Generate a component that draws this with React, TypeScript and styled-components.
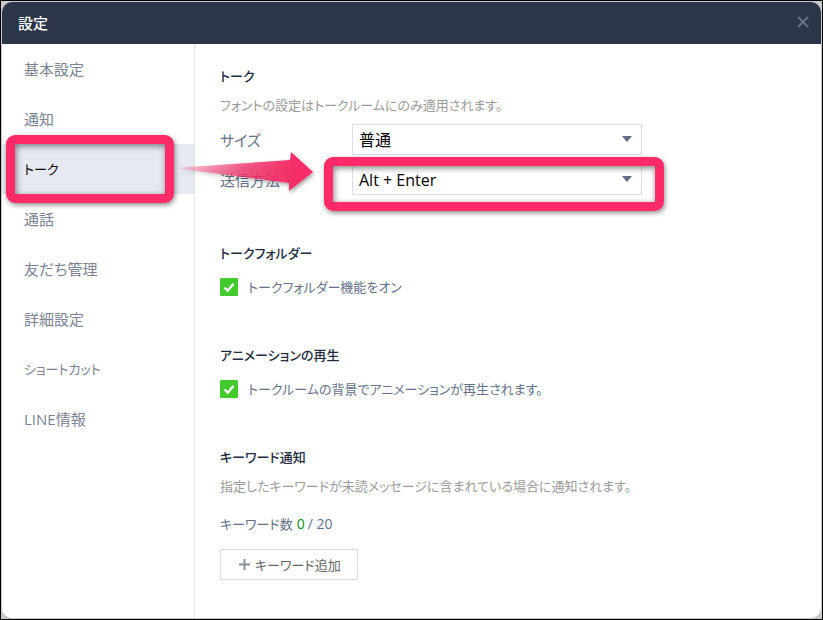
import React, { useState } from "react";
import styled, { createGlobalStyle, css } from "styled-components";

const GlobalStyle = createGlobalStyle`
  *, *::before, *::after { box-sizing: border-box; }
  body {
    margin: 0;
    font-family: "Open Sans", "Noto Sans CJK JP", sans-serif;
    font-size: 13px;
    line-height: 20px;
    font-feature-settings: "palt";
    color: #6b7487;
  }
  button, select, input { font: inherit; font-feature-settings: inherit; }
`;

const Desktop = styled.div`
  display: flex;
  min-height: 100vh;
  border: 1px solid #000;
  background: #c9c9cb;
  padding: 1px;
`;

const Window = styled.div`
  display: flex;
  flex: 1;
  flex-direction: column;
  overflow: hidden;
  border-radius: 10px;
  background: #fff;
`;

const TitleBar = styled.header`
  display: flex;
  align-items: center;
  justify-content: space-between;
  height: 42px;
  padding: 0 12px 0 16px;
  background: #2c3549;
`;

const WindowTitle = styled.h1`
  margin: 0;
  font-size: 15px;
  font-weight: 500;
  color: #fff;
`;

const CloseButton = styled.button`
  display: flex;
  padding: 0 0 2px;
  border: 0;
  background: none;
  color: #65718a;
`;

const Body = styled.div`
  display: flex;
  flex: 1;
`;

const Nav = styled.nav`
  flex: 0 0 193px;
  border-right: 1px solid #e5e6ea;
  font-size: 15px;
`;

const NavItem = styled.a<{ $active: boolean; $compact: boolean }>`
  position: relative;
  display: flex;
  align-items: center;
  height: 50px;
  padding-left: 22px;
  background: ${(p) => (p.$active ? "#e6e9f1" : "transparent")};
  color: ${(p) => (p.$active ? "#000" : "#7b8394")};
  font-size: ${(p) => (p.$compact ? "13px" : "15px")};
  text-decoration: none;
`;

const Content = styled.main`
  display: flex;
  flex: 1;
  flex-direction: column;
  gap: 48px;
  padding: 22px 25px;
`;

const Section = styled.section`
  display: flex;
  flex-direction: column;
  align-items: flex-start;
`;

const SectionTitle = styled.h2`
  margin: 0 0 9px;
  font-size: 13px;
  font-weight: 500;
  color: #232c3e;
`;

const Note = styled.p`
  margin: 0;
  color: #9b9b9b;
`;

const Fields = styled.div`
  display: grid;
  grid-template-columns: 132px minmax(0, 290px);
  row-gap: 9px;
  align-self: stretch;
  align-items: center;
  padding-top: 9px;
`;

const FieldLabel = styled.label`
  color: #66728a;
  font-size: 15px;
`;

const SelectBox = styled.div`
  position: relative;
  display: flex;
`;

const Select = styled.select`
  flex: 1;
  height: 31px;
  padding: 0 6px;
  border: 1px solid #dcdfe5;
  border-radius: 0;
  background: #fff;
  color: #000;
  font-size: 16px;
  appearance: none;
`;

const SelectArrow = styled.svg`
  position: absolute;
  top: 12px;
  right: 10px;
  pointer-events: none;
`;

const CheckLabel = styled.label`
  display: flex;
  align-items: center;
  gap: 10px;
  padding-top: 5px;
  color: #66728a;
`;

const CheckBox = styled.span`
  display: grid;
  width: 18px;
  height: 18px;

  > * { grid-area: 1 / 1; }
`;

const CheckInput = styled.input`
  width: 18px;
  height: 18px;
  margin: 0;
  border: 1px solid #43cb2e;
  border-radius: 1px;
  appearance: none;

  &:checked { background: #43cb2e; }
`;

const CheckMark = styled.svg`
  pointer-events: none;
`;

const Count = styled.p`
  display: flex;
  gap: 4px;
  margin: 18px 0 15px;
  color: #66728a;
`;

const CountValue = styled.span`
  display: flex;
  gap: 3px;
  font-size: 14px;
`;

const CountNow = styled.b`
  font-weight: 400;
  color: #0b8a1c;
`;

const AddButton = styled.button`
  display: flex;
  align-items: center;
  gap: 5px;
  height: 31px;
  padding: 0 16px 0 18px;
  border: 1px solid #d9dce3;
  background: #fff;
  color: #666;
`;

const highlight = css`
  position: absolute;
  z-index: 2;
  border: 9px solid #ff2b68;
  border-radius: 9px;
  box-shadow: 1px 2px 5px rgba(0, 0, 0, 0.45), inset 1px 2px 6px rgba(0, 0, 0, 0.5);
  pointer-events: none;
`;

const NavHighlight = styled.span`
  ${highlight}
  inset: -9px 20px -9px 4px;
`;

const SelectHighlight = styled.span`
  ${highlight}
  inset: -7px -22px -16px -28px;
`;

const Pointer = styled.svg`
  position: absolute;
  z-index: 3;
  top: 3px;
  left: 170px;
  overflow: visible;
  pointer-events: none;
`;

const navItems = [
  { name: "基本設定" },
  { name: "通知" },
  { name: "トーク", compact: true, active: true },
  { name: "通話" },
  { name: "友だち管理" },
  { name: "詳細設定" },
  { name: "ショートカット", compact: true },
  { name: "LINE情報" },
];

function DownArrow() {
  return (
    <SelectArrow width="10" height="6" viewBox="0 0 10 6" aria-hidden="true">
      <path d="M0 0H10L5.8 5.2Q5 6 4.2 5.2Z" fill="#657087" />
    </SelectArrow>
  );
}

function PointerArrow() {
  return (
    <Pointer width="144" height="46" viewBox="0 0 144 46" aria-hidden="true">
      <defs>
        <linearGradient id="pointer-fill" x1="0" x2="1" y1="0" y2="0">
          <stop offset="0" stopColor="#f42c66" stopOpacity="0" />
          <stop offset="0.15" stopColor="#f42c66" stopOpacity="0.35" />
          <stop offset="0.5" stopColor="#f42c66" stopOpacity="0.72" />
          <stop offset="0.85" stopColor="#f42c66" stopOpacity="0.97" />
          <stop offset="1" stopColor="#ff2b68" />
        </linearGradient>
        <filter id="pointer-shadow" x="-5%" y="-20%" width="115%" height="150%">
          <feDropShadow dx="1" dy="2" stdDeviation="2" floodOpacity="0.4" />
        </filter>
      </defs>
      <path
        d="M2 21L118 13L119 5L141 25L117 44L117 36Z"
        fill="url(#pointer-fill)"
        filter="url(#pointer-shadow)"
      />
    </Pointer>
  );
}

function Check({ label }: { label: string }) {
  const [on, setOn] = useState(true);
  return (
    <CheckLabel>
      <CheckBox>
        <CheckInput type="checkbox" checked={on} onChange={() => setOn(!on)} />
        <CheckMark width="18" height="18" viewBox="0 0 18 18" aria-hidden="true">
          <path d="M4.5 9.5L7.7 12.7L13.5 5.8" fill="none" stroke="#fff" strokeWidth="2.4" />
        </CheckMark>
      </CheckBox>
      {label}
    </CheckLabel>
  );
}

export default function App() {
  return (
    <>
      <GlobalStyle />
      <Desktop>
        <Window>
          <TitleBar>
            <WindowTitle>設定</WindowTitle>
            <CloseButton type="button" aria-label="閉じる">
              <svg width="12" height="12" viewBox="0 0 12 12">
                <path d="M1.5 1.5L10.5 10.5M10.5 1.5L1.5 10.5" stroke="currentColor" strokeWidth="2" strokeLinecap="round" />
              </svg>
            </CloseButton>
          </TitleBar>
          <Body>
            <Nav>
              {navItems.map(({ name, active = false, compact = false }) => (
                <NavItem
                  key={name}
                  href="#"
                  $active={active}
                  $compact={compact}
                  aria-current={active ? "page" : undefined}
                >
                  {name}
                  {active && <NavHighlight />}
                  {active && <PointerArrow />}
                </NavItem>
              ))}
            </Nav>
            <Content>
              <Section>
                <SectionTitle>トーク</SectionTitle>
                <Note>フォントの設定はトークルームにのみ適用されます。</Note>
                <Fields>
                  <FieldLabel htmlFor="size">サイズ</FieldLabel>
                  <SelectBox>
                    <Select id="size">
                      <option>普通</option>
                    </Select>
                    <DownArrow />
                  </SelectBox>
                  <FieldLabel htmlFor="send">送信方法</FieldLabel>
                  <SelectBox>
                    <Select id="send">
                      <option>Alt + Enter</option>
                    </Select>
                    <DownArrow />
                    <SelectHighlight />
                  </SelectBox>
                </Fields>
              </Section>
              <Section>
                <SectionTitle>トークフォルダー</SectionTitle>
                <Check label="トークフォルダー機能をオン" />
              </Section>
              <Section>
                <SectionTitle>アニメーションの再生</SectionTitle>
                <Check label="トークルームの背景でアニメーションが再生されます。" />
              </Section>
              <Section>
                <SectionTitle>キーワード通知</SectionTitle>
                <Note>指定したキーワードが未読メッセージに含まれている場合に通知されます。</Note>
                <Count>
                  キーワード数
                  <CountValue>
                    <CountNow>0</CountNow>
                    <span>/ 20</span>
                  </CountValue>
                </Count>
                <AddButton type="button">
                  <svg width="11" height="11" viewBox="0 0 11 11" aria-hidden="true">
                    <path d="M5.5 0V11M0 5.5H11" stroke="#8a8f99" strokeWidth="2" />
                  </svg>
                  キーワード追加
                </AddButton>
              </Section>
            </Content>
          </Body>
        </Window>
      </Desktop>
    </>
  );
}
